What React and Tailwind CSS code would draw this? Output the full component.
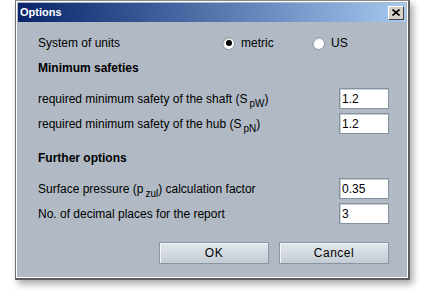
const Sub = ({ children }) => (
  <span className="relative top-[4px] ml-[2px] text-[10px]">{children}</span>
);

const Radio = ({ checked, label }) => (
  <label className="flex items-center gap-[6px]">
    <span className="flex h-[13px] w-[13px] items-center justify-center rounded-full border border-[#8a96a3] bg-white shadow-[inset_1px_1px_1px_rgba(0,0,0,0.25)]">
      {checked && <span className="h-[6px] w-[6px] rounded-full bg-black" />}
    </span>
    <span>{label}</span>
  </label>
);

const Field = ({ value }) => (
  <div className="flex h-[21px] w-[50px] items-center border border-[#8593a1] bg-white pl-[2px] shadow-[inset_1px_1px_0_#c9ced4]">
    {value}
  </div>
);

const Row = ({ className, children, value }) => (
  <div className={"flex h-[21px] items-center justify-between " + className}>
    <span>{children}</span>
    <Field value={value} />
  </div>
);

const Button = ({ children }) => (
  <button className="flex h-[22px] w-[110px] items-center justify-center border border-[#8995a2] bg-gradient-to-b from-[#e3e8ee] to-[#c4cbd4] shadow-[inset_1px_1px_0_#f4f6f8] tracking-[0.5px]">
    {children}
  </button>
);

export default function App() {
  return (
    <div
      className="h-[295px] w-[425px] bg-white text-[12px] text-black"
      style={{ fontFamily: '"Liberation Sans", Arial, sans-serif' }}
    >
      <div className="ml-[15px] h-[280px] w-[395px] border-l border-t border-r-2 border-b-2 border-l-[#707070] border-t-[#8a8a8a] border-r-[#5c5c5c] border-b-[#5c5c5c] shadow-[3px_4px_7px_rgba(0,0,0,0.35)]">
        <div className="flex h-full flex-col border border-white bg-[#b1bac4]">
          <div className="mx-[1px] mt-[1px] flex h-[19px] items-center justify-between bg-gradient-to-r from-[#0a246a] to-[#a6caf0] pl-[2px] pr-[2px]">
            <span className="text-[11px] font-bold text-white">Options</span>
            <button className="flex h-[14px] w-[16px] items-center justify-center border border-b-[#404040] border-r-[#404040] border-l-white border-t-white bg-[#d4d0c8]">
              <svg width="8" height="7" viewBox="0 0 8 7">
                <path d="M0.5 0.5 L7.5 6.5 M7.5 0.5 L0.5 6.5" stroke="#000" strokeWidth="1.6" />
              </svg>
            </button>
          </div>

          <div className="flex flex-1 flex-col pl-[21px] pr-[18px]">
            <div className="mt-[11px] flex h-[20px] items-center">
              <span className="w-[184px]">System of units</span>
              <div className="w-[90px]">
                <Radio checked label="metric" />
              </div>
              <Radio label="US" />
            </div>

            <div className="mt-[5px] flex h-[20px] items-center font-bold">
              Minimum safeties
            </div>
            <Row className="mt-[10px]" value="1.2">
              required minimum safety of the shaft (S<Sub>pW</Sub>)
            </Row>
            <Row className="mt-[4px]" value="1.2">
              required minimum safety of the hub (S<Sub>pN</Sub>)
            </Row>

            <div className="mt-[14px] flex h-[20px] items-center font-bold">
              Further options
            </div>
            <Row className="mt-[10px]" value="0.35">
              Surface pressure (p<Sub>zul</Sub>) calculation factor
            </Row>
            <Row className="mt-[4px]" value="3">
              No. of decimal places for the report
            </Row>

            <div className="mt-[18px] flex justify-end gap-[10px]">
              <Button>OK</Button>
              <Button>Cancel</Button>
            </div>
          </div>
        </div>
      </div>
    </div>
  );
}
